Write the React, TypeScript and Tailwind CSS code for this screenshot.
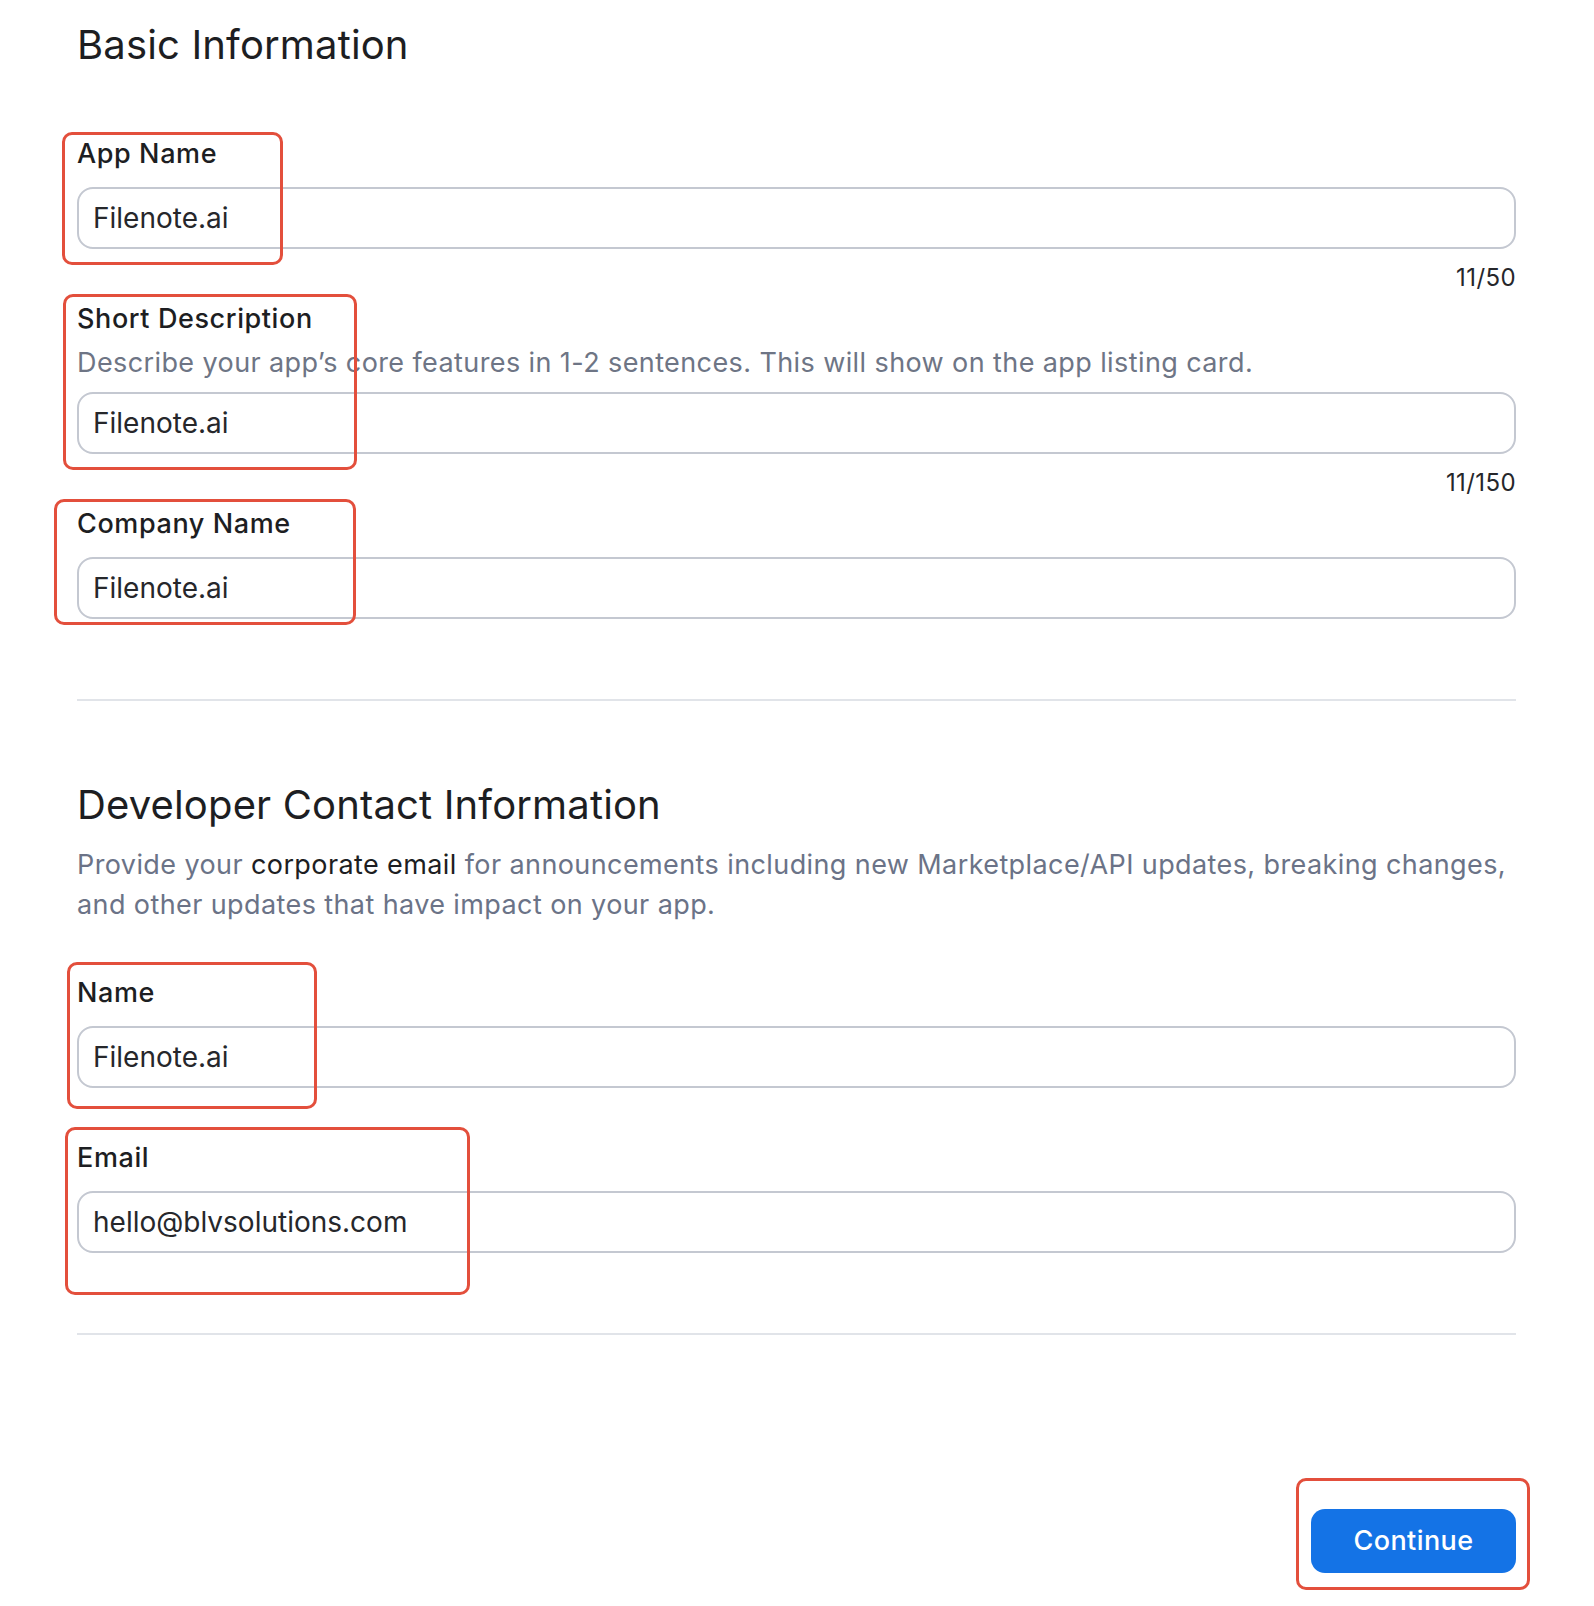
import React from 'react';

interface FieldProps {
  label: string;
  value: string;
  hint?: string;
  counter?: string;
  reserveCounter?: boolean;
}

function Field({ label, value, hint, counter, reserveCounter }: FieldProps) {
  return (
    <div className="flex flex-col">
      <label className="text-[27px] leading-[36px] font-medium tracking-[0.6px] text-[#1d1e22]">{label}</label>
      {hint && (
        <p className="mt-[8px] text-[27px] leading-[36px] tracking-[0.4px] text-[#6e7585]">{hint}</p>
      )}
      <input
        readOnly
        value={value}
        className={`${hint ? 'mt-[11px]' : 'mt-[15px]'} h-[62px] w-full rounded-[16px] border-2 border-[#c4c8d1] bg-white px-[14px] text-[28px] text-[#26272b] outline-none`}
      />
      {(counter || reserveCounter) && (
        <div className="mt-[13px] h-[32px] text-right text-[24px] leading-[32px] tracking-[0.4px] text-[#26272b]">
          {counter}
        </div>
      )}
    </div>
  );
}

// Outlined callouts drawn over the form fields
const callouts = [
  'left-[62px] top-[132px] w-[221px] h-[133px]',
  'left-[63px] top-[294px] w-[294px] h-[176px]',
  'left-[54px] top-[499px] w-[302px] h-[126px]',
  'left-[67px] top-[962px] w-[250px] h-[147px]',
  'left-[65px] top-[1127px] w-[405px] h-[168px]',
  'left-[1296px] top-[1478px] w-[234px] h-[112px]',
];

export default function App() {
  return (
    <div
      className="relative min-h-[1606px] w-full bg-white"
      style={{ fontFamily: 'Inter, "Noto Sans", sans-serif' }}
    >
      <div className="pl-[77px] pr-[78px] pt-[21px]">
        <h2 className="text-[40px] leading-[48px] font-normal tracking-[0.15px] text-[#1d1e22]">Basic Information</h2>

        <div className="mt-[67px] flex flex-col gap-[7px]">
          <Field label="App Name" value="Filenote.ai" counter="11/50" />
          <Field
            label="Short Description"
            value="Filenote.ai"
            hint="Describe your app’s core features in 1-2 sentences. This will show on the app listing card."
            counter="11/150"
          />
          <Field label="Company Name" value="Filenote.ai" />
        </div>

        <hr className="mt-[80px] border-t-2 border-[#e1e4e9]" />

        <h2 className="mt-[80px] text-[40px] leading-[48px] font-normal tracking-[0.15px] text-[#1d1e22]">
          Developer Contact Information
        </h2>
        <p className="mt-[16px] text-[27px] leading-[40px] tracking-[0.4px] text-[#6b7387]">
          Provide your <span className="text-[#1d1e22]">corporate email</span> for announcements including new
          Marketplace/API updates, breaking changes,
          <br />
          and other updates that have impact on your app.
        </p>

        <div className="mt-[50px] flex flex-col gap-[7px]">
          <Field label="Name" value="Filenote.ai" reserveCounter />
          <Field label="Email" value="hello@blvsolutions.com" />
        </div>

        <hr className="mt-[80px] border-t-2 border-[#e1e4e9]" />

        <div className="mt-[174px] flex justify-end">
          <button className="h-[64px] w-[205px] rounded-[14px] bg-[#1473e6] text-[27px] font-medium tracking-[0.4px] text-white">
            Continue
          </button>
        </div>
      </div>

      {callouts.map((c) => (
        <div
          key={c}
          className={`pointer-events-none absolute rounded-[10px] border-[3px] border-[#e34f3c] ${c}`}
        />
      ))}
    </div>
  );
}
